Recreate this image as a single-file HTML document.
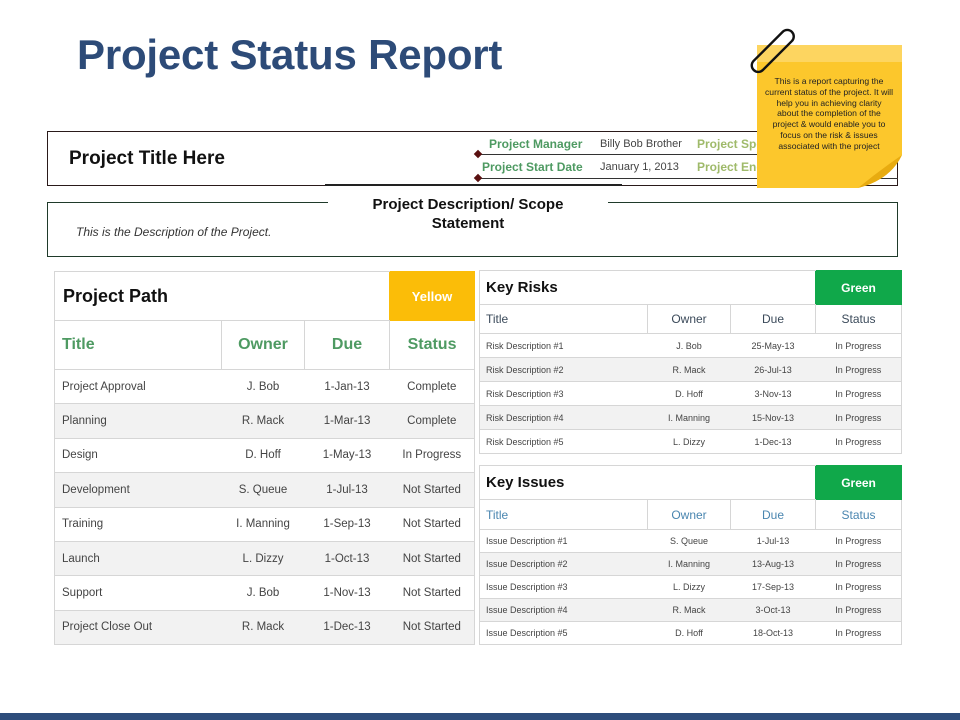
<!DOCTYPE html>
<html><head><meta charset="utf-8"><style>
*{margin:0;padding:0;box-sizing:border-box}
body{width:960px;height:720px;background:#fff;position:relative;overflow:hidden;font-family:"Liberation Sans",sans-serif;color:#333}
.a{position:absolute}
.t{white-space:nowrap}
table{border-collapse:collapse;position:absolute;table-layout:fixed}
td{border:1px solid #d6d6d6;text-align:center;white-space:nowrap;overflow:hidden}
</style></head><body>
<div class="a t" style="left:77px;top:31px;font-size:42px;font-weight:bold;color:#2d4b78;letter-spacing:-0.2px">Project Status Report</div>

<!-- top box -->
<div class="a" style="left:47px;top:131px;width:851px;height:55px;border:1px solid #2a1a1a"></div>
<div class="a t" style="left:69px;top:148px;font-size:19px;font-weight:bold;color:#111">Project Title Here</div>
<div class="a" style="left:478px;top:154px;width:420px;height:1px;background:#333"></div>
<div class="a" style="left:478px;top:178px;width:420px;height:1px;background:#333"></div>
<div class="a" style="left:475px;top:151px;width:6px;height:6px;background:#5a1010;transform:rotate(45deg)"></div>
<div class="a" style="left:475px;top:175px;width:6px;height:6px;background:#5a1010;transform:rotate(45deg)"></div>
<div class="a t" style="left:489px;top:137px;font-size:12px;font-weight:bold;color:#4e9a62">Project Manager</div>
<div class="a t" style="left:600px;top:138px;font-size:11px;color:#444">Billy Bob Brother</div>
<div class="a t" style="left:697px;top:137px;font-size:12px;font-weight:bold;color:#9fba6a">Project Sponsor</div>
<div class="a t" style="left:482px;top:160px;font-size:12px;font-weight:bold;color:#4e9a62">Project Start Date</div>
<div class="a t" style="left:600px;top:161px;font-size:11px;color:#444">January 1, 2013</div>
<div class="a t" style="left:697px;top:160px;font-size:12px;font-weight:bold;color:#9fba6a">Project End</div>
<div class="a t" style="left:872px;top:161px;font-size:11px;color:#4a86b0">013</div>
<div class="a" style="left:325px;top:184px;width:297px;height:2px;background:#222"></div>

<!-- description box -->
<div class="a" style="left:47px;top:202px;width:851px;height:55px;border:1px solid #1f3a2a"></div>
<div class="a" style="left:328px;top:196px;width:280px;height:40px;background:#fff"></div>
<div class="a" style="left:328px;top:195px;width:280px;text-align:center;font-size:15px;font-weight:bold;color:#111;line-height:19px">Project Description/ Scope<br>Statement</div>
<div class="a t" style="left:76px;top:225px;font-size:12px;font-style:italic;color:#333">This is the Description of the Project.</div>

<!-- project path -->
<table style="left:54px;top:271px;width:420px;font-size:11.5px;color:#444">
<colgroup><col style="width:167px"><col style="width:83px"><col style="width:85px"><col style="width:85px"></colgroup>
<tr style="height:49px"><td colspan="3" style="text-align:left;padding-left:8px;font-size:18px;font-weight:bold;color:#111;border-right:none">Project Path</td><td style="background:#fbbd08;color:#fff;font-weight:bold;font-size:13px;border-color:#fbbd08">Yellow</td></tr>
<tr style="height:49px;font-size:16px;font-weight:bold;color:#4e9a62"><td style="text-align:left;padding-left:7px">Title</td><td>Owner</td><td>Due</td><td>Status</td></tr>
<tr style="height:34.4px"><td style="text-align:left;padding-left:7px;border-right:none">Project Approval</td><td style="border-left:none;border-right:none">J. Bob</td><td style="border-left:none;border-right:none">1-Jan-13</td><td style="border-left:none">Complete</td></tr>
<tr style="height:34.4px;background:#f2f2f2"><td style="text-align:left;padding-left:7px;border-right:none">Planning</td><td style="border-left:none;border-right:none">R. Mack</td><td style="border-left:none;border-right:none">1-Mar-13</td><td style="border-left:none">Complete</td></tr>
<tr style="height:34.4px"><td style="text-align:left;padding-left:7px;border-right:none">Design</td><td style="border-left:none;border-right:none">D. Hoff</td><td style="border-left:none;border-right:none">1-May-13</td><td style="border-left:none">In Progress</td></tr>
<tr style="height:34.4px;background:#f2f2f2"><td style="text-align:left;padding-left:7px;border-right:none">Development</td><td style="border-left:none;border-right:none">S. Queue</td><td style="border-left:none;border-right:none">1-Jul-13</td><td style="border-left:none">Not Started</td></tr>
<tr style="height:34.4px"><td style="text-align:left;padding-left:7px;border-right:none">Training</td><td style="border-left:none;border-right:none">I. Manning</td><td style="border-left:none;border-right:none">1-Sep-13</td><td style="border-left:none">Not Started</td></tr>
<tr style="height:34.4px;background:#f2f2f2"><td style="text-align:left;padding-left:7px;border-right:none">Launch</td><td style="border-left:none;border-right:none">L. Dizzy</td><td style="border-left:none;border-right:none">1-Oct-13</td><td style="border-left:none">Not Started</td></tr>
<tr style="height:34.4px"><td style="text-align:left;padding-left:7px;border-right:none">Support</td><td style="border-left:none;border-right:none">J. Bob</td><td style="border-left:none;border-right:none">1-Nov-13</td><td style="border-left:none">Not Started</td></tr>
<tr style="height:34.4px;background:#f2f2f2"><td style="text-align:left;padding-left:7px;border-right:none">Project Close Out</td><td style="border-left:none;border-right:none">R. Mack</td><td style="border-left:none;border-right:none">1-Dec-13</td><td style="border-left:none">Not Started</td></tr>
</table>

<!-- key risks -->
<table style="left:479px;top:270px;width:422px;font-size:9px;color:#444">
<colgroup><col style="width:168px"><col style="width:83px"><col style="width:85px"><col style="width:86px"></colgroup>
<tr style="height:34px"><td colspan="3" style="text-align:left;padding-left:6px;font-size:15px;font-weight:bold;color:#111;border-right:none">Key Risks</td><td style="background:#10a84a;color:#fff;font-weight:bold;font-size:12px;border-color:#10a84a">Green</td></tr>
<tr style="height:29px;font-size:12px;color:#3b4a5a"><td style="text-align:left;padding-left:6px">Title</td><td>Owner</td><td>Due</td><td>Status</td></tr>
<tr style="height:24px"><td style="text-align:left;padding-left:6px;border-right:none">Risk Description #1</td><td style="border-left:none;border-right:none">J. Bob</td><td style="border-left:none;border-right:none">25-May-13</td><td style="border-left:none">In Progress</td></tr>
<tr style="height:24px;background:#f2f2f2"><td style="text-align:left;padding-left:6px;border-right:none">Risk Description #2</td><td style="border-left:none;border-right:none">R. Mack</td><td style="border-left:none;border-right:none">26-Jul-13</td><td style="border-left:none">In Progress</td></tr>
<tr style="height:24px"><td style="text-align:left;padding-left:6px;border-right:none">Risk Description #3</td><td style="border-left:none;border-right:none">D. Hoff</td><td style="border-left:none;border-right:none">3-Nov-13</td><td style="border-left:none">In Progress</td></tr>
<tr style="height:24px;background:#f2f2f2"><td style="text-align:left;padding-left:6px;border-right:none">Risk Description #4</td><td style="border-left:none;border-right:none">I. Manning</td><td style="border-left:none;border-right:none">15-Nov-13</td><td style="border-left:none">In Progress</td></tr>
<tr style="height:24px"><td style="text-align:left;padding-left:6px;border-right:none">Risk Description #5</td><td style="border-left:none;border-right:none">L. Dizzy</td><td style="border-left:none;border-right:none">1-Dec-13</td><td style="border-left:none">In Progress</td></tr>
</table>

<!-- key issues -->
<table style="left:479px;top:465px;width:422px;font-size:9px;color:#444">
<colgroup><col style="width:168px"><col style="width:83px"><col style="width:85px"><col style="width:86px"></colgroup>
<tr style="height:34px"><td colspan="3" style="text-align:left;padding-left:6px;font-size:15px;font-weight:bold;color:#111;border-right:none">Key Issues</td><td style="background:#10a84a;color:#fff;font-weight:bold;font-size:12px;border-color:#10a84a">Green</td></tr>
<tr style="height:30px;font-size:12px;color:#4a86b0"><td style="text-align:left;padding-left:6px">Title</td><td>Owner</td><td>Due</td><td>Status</td></tr>
<tr style="height:23px"><td style="text-align:left;padding-left:6px;border-right:none">Issue Description #1</td><td style="border-left:none;border-right:none">S. Queue</td><td style="border-left:none;border-right:none">1-Jul-13</td><td style="border-left:none">In Progress</td></tr>
<tr style="height:23px;background:#f2f2f2"><td style="text-align:left;padding-left:6px;border-right:none">Issue Description #2</td><td style="border-left:none;border-right:none">I. Manning</td><td style="border-left:none;border-right:none">13-Aug-13</td><td style="border-left:none">In Progress</td></tr>
<tr style="height:23px"><td style="text-align:left;padding-left:6px;border-right:none">Issue Description #3</td><td style="border-left:none;border-right:none">L. Dizzy</td><td style="border-left:none;border-right:none">17-Sep-13</td><td style="border-left:none">In Progress</td></tr>
<tr style="height:23px;background:#f2f2f2"><td style="text-align:left;padding-left:6px;border-right:none">Issue Description #4</td><td style="border-left:none;border-right:none">R. Mack</td><td style="border-left:none;border-right:none">3-Oct-13</td><td style="border-left:none">In Progress</td></tr>
<tr style="height:23px"><td style="text-align:left;padding-left:6px;border-right:none">Issue Description #5</td><td style="border-left:none;border-right:none">D. Hoff</td><td style="border-left:none;border-right:none">18-Oct-13</td><td style="border-left:none">In Progress</td></tr>
</table>

<!-- sticky note -->
<svg class="a" style="left:740px;top:20px" width="170" height="175">
<path d="M17 25 H162 V135 Q150 160 118 168 H17 Z" fill="#fcc72c"/>
<rect x="17" y="25" width="145" height="17" fill="#fdd560"/>
<path d="M162 135 Q150 160 118 168 Q140 150 162 135 Z" fill="#e8ab10"/>
<rect x="-25" y="-6" width="54" height="13" rx="6.5" fill="none" stroke="#111" stroke-width="2.4" transform="translate(31,32) rotate(-45)"/>
</svg>
<div class="a" style="left:765px;top:76px;width:128px;text-align:center;font-size:8.6px;line-height:10.8px;color:#222">This is a report capturing the current status of the project. It will help you in achieving clarity about the completion of the project &amp; would enable you to focus on the risk &amp; issues associated with the project</div>

<div class="a" style="left:0;top:713px;width:960px;height:7px;background:#2e4d7b"></div>
</body></html>
